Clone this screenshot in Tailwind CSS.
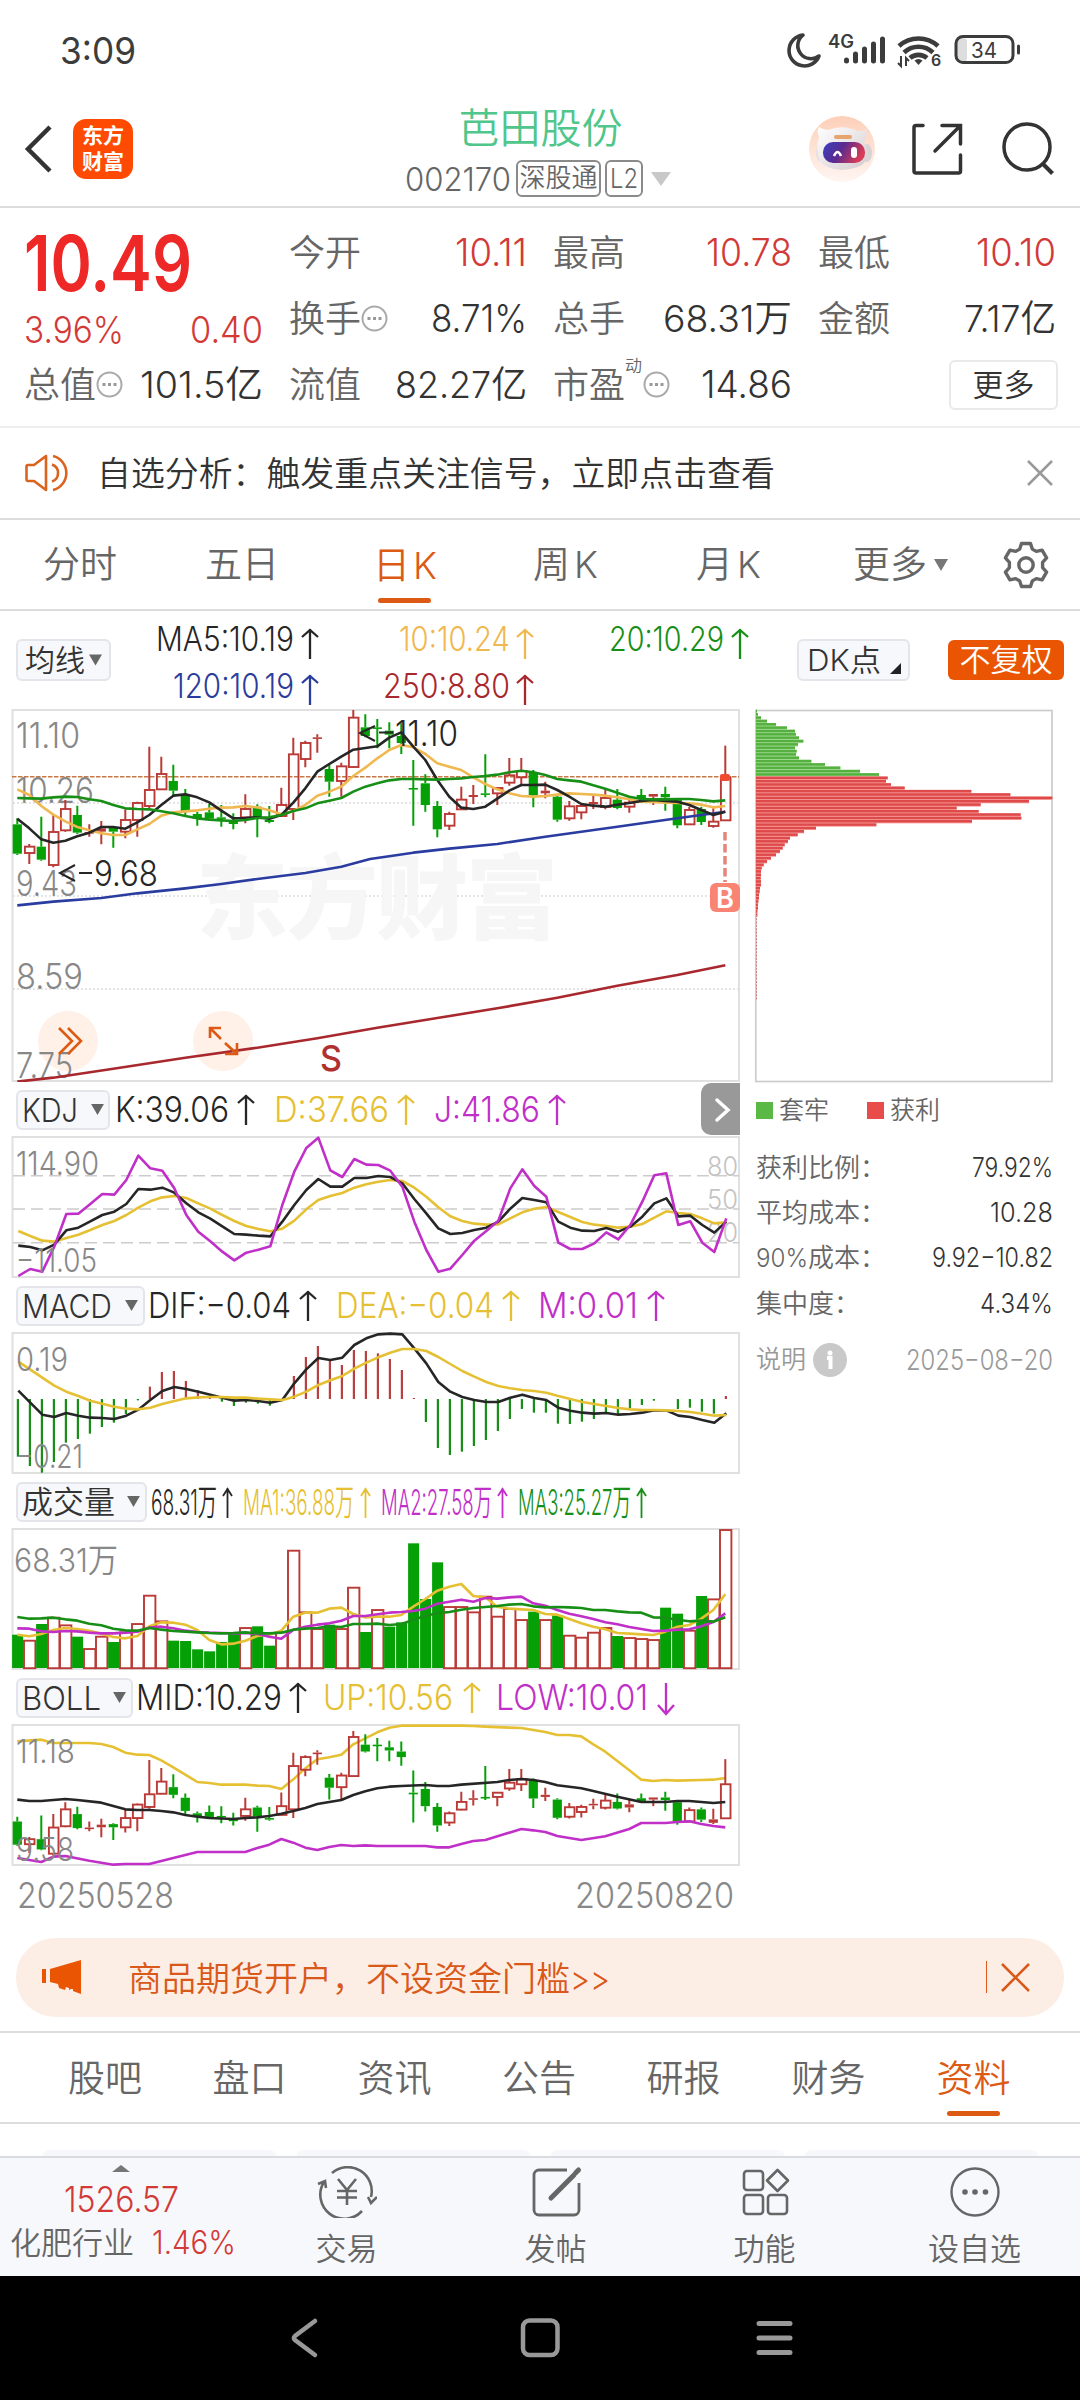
<!DOCTYPE html>
<html lang="zh-CN">
<head>
<meta charset="utf-8">
<title>芭田股份 002170</title>
<script src="https://cdn.jsdelivr.net/npm/@tailwindcss/browser@4"></script>
</head>
<body class="w-[1080px] h-[2400px] overflow-hidden bg-white font-['Inter','Noto_Sans_CJK_SC',sans-serif] font-[350] text-[#333] whitespace-nowrap">
<div class="flex flex-col w-[1080px] h-[2400px]">

<!-- status bar -->
<div class="h-[100px] flex items-center justify-between pl-[60px] pr-[58px]">
  <span data-w="76" class="inline-block text-[37px] font-normal text-[#3c3c3c]">3:09</span>
  <svg class="w-[236px] h-[40px] text-[#3c3c3c]" viewBox="786 30 236 40" fill="none" stroke="currentColor">
    <path d="M803 35a15.5 15.5 0 1 0 16 21a13 13 0 0 1-16-21z" stroke-width="3.6" stroke-linejoin="round"/>
    <text x="828" y="48" font-size="18" font-weight="600" fill="currentColor" stroke="none" textLength="26" lengthAdjust="spacingAndGlyphs">4G</text>
    <g stroke-width="5" stroke-linecap="round"><path d="M846.500 60v1M855.500 54v7M864.500 49v12M873.500 44v17M882.500 39v22"/></g>
    <path d="M899 46a29 29 0 0 1 39 0M904 52.500a21 21 0 0 1 29 0M910 58a13 13 0 0 1 17 0" stroke-width="4.600"/>
    <path d="M918.500 65l-4-4.500a6 6 0 0 1 8 0z" fill="currentColor" stroke="none"/>
    <path d="M901 56v10l-3-3M906 66v-8l3 3" stroke-width="2"/>
    <text x="931" y="66" font-size="16" font-weight="600" fill="currentColor" stroke="none">6</text>
    <rect x="957" y="38" width="10" height="24" rx="4" fill="#ddd" stroke="none"/>
    <rect x="956" y="36.500" width="57" height="26" rx="7" stroke-width="3"/>
    <path d="M1018.500 46v7" stroke-width="3" stroke-linecap="round"/>
    <text x="971" y="58" font-size="22" font-weight="400" fill="currentColor" stroke="none" textLength="26" lengthAdjust="spacingAndGlyphs">34</text>
  </svg>
</div>

<!-- header -->
<div class="h-[108px] border-b-2 border-[#dcdcdf] flex items-start">
  <svg class="w-[73px] h-[106px] shrink-0" viewBox="0 100 73 106" fill="none"><path d="M50 127L28 149L50 171" stroke="#333" stroke-width="4.500" /></svg>
  <div class="w-[60px] h-[60px] mt-[19px] shrink-0 rounded-[13px] bg-[#fe4a03] text-white text-[21px] leading-[26px] font-bold flex flex-col items-center justify-center"><span>东方</span><span>财富</span></div>
  <div class="w-[405px] ml-[205px] flex flex-col items-center">
    <div class="h-[56px] leading-[56px] text-[41px] text-[#50c68c]">芭田股份</div>
    <div class="h-[46px] flex items-center self-start ml-[67px] text-[#666]">
      <span data-w="106" class="inline-block text-[33px]">002170</span>
      <span class="ml-[5px] w-[85px] h-[37px] border-2 border-[#8a8a8a] rounded-md text-[26px] leading-[32px] text-center">深股通</span>
      <span class="ml-[4px] w-[38px] h-[37px] border-2 border-[#8a8a8a] rounded-md text-[27px] leading-[33px] text-center"><span data-w="28" class="inline-block">L2</span></span>
      <svg class="ml-[8px] w-5 h-[14px]" viewBox="0 0 20 14"><path d="M0 0h20L10 14z" fill="#c8c8c8"/></svg>
    </div>
  </div>
  <svg class="w-[270px] h-[106px] ml-auto shrink-0" viewBox="810 100 270 106" fill="none" stroke="#333" stroke-width="3.500" overflow="visible">
    <defs>
      <linearGradient id="halo" x1="0" y1="0" x2="0" y2="1"><stop offset="0" stop-color="#fdcfb8"/><stop offset="1" stop-color="#fff6f2"/></linearGradient>
      <linearGradient id="visor" x1="0" y1="0" x2="1" y2="0.300"><stop offset="0" stop-color="#3a3fc0"/><stop offset="0.500" stop-color="#5a2a90"/><stop offset="1" stop-color="#d83b55"/></linearGradient>
      <linearGradient id="shell" x1="0" y1="0" x2="1" y2="1"><stop offset="0" stop-color="#fff"/><stop offset="1" stop-color="#d4ccd0"/></linearGradient>
    </defs>
    <g stroke="none">
      <circle cx="842" cy="149" r="33" fill="url(#halo)"/>
      <ellipse cx="821" cy="153" rx="5" ry="9" fill="#e6e0e3"/><ellipse cx="867" cy="153" rx="5" ry="9" fill="#d9d2d6"/>
      <path d="M819 137q-3-6 0-10q4 3 9 3q15-6 30 1q5 0 8-2q2 7-2 12q6 12 2 20q-6 8-24 9q-17-1-22-9q-5-12-1-24z" fill="url(#shell)"/>
      <rect x="834" y="135" width="18" height="4" rx="2" fill="#e7a46c"/>
      <rect x="823" y="142" width="42" height="21" rx="10" fill="url(#visor)"/>
      <rect x="851" y="147" width="6" height="11" rx="3" fill="#fff"/>
    </g>
    <path d="M834 156q3.500-8 7 0" stroke="#fff" stroke-width="2.600"/>
    <path d="M923 125.500H916a2 2 0 0 0-2 2V171a2 2 0 0 0 2 2H958.500a2 2 0 0 0 2-2V155M942 125.500H960.500V144M960 126L935 151" stroke-linecap="round"/>
    <circle cx="1027" cy="147" r="23"/><path d="M1043 164L1052.500 173.500" stroke-width="4"/>
  </svg>
</div>

<!-- quote -->
<div class="h-[221px] border-b-2 border-[#eee] pt-[12px] px-6 grid grid-cols-[239px_238px_239px_238px] grid-rows-[66px_66px_66px] gap-x-[26px] text-[36px] leading-[66px]">
  <div class="row-span-2 text-[#d23a38]">
    <div class="h-[86px] leading-[86px] text-[77px] font-semibold text-[#ee2826]"><span data-w="168" class="inline-block">10.49</span></div>
    <div class="h-[46px] leading-[48px] text-[37px] flex justify-between"><span data-w="100" class="inline-block">3.96%</span><span data-w="73" class="inline-block">0.40</span></div>
  </div>
  <div class="flex justify-between"><span class="text-[#666]">今开</span><span data-w="72" class="inline-block text-[38px] text-[#d23a38]">10.11</span></div>
  <div class="flex justify-between"><span class="text-[#666]">最高</span><span data-w="86" class="inline-block text-[38px] text-[#d23a38]">10.78</span></div>
  <div class="flex justify-between"><span class="text-[#666]">最低</span><span data-w="80" class="inline-block text-[38px] text-[#d23a38]">10.10</span></div>
  <div class="flex justify-between"><span class="text-[#666] flex items-center">换手<svg class="w-[27px] h-[27px]" viewBox="0 0 27 27"><circle cx="13.500" cy="13.500" r="12" fill="none" stroke="#aaa" stroke-width="2"/><path d="M6.500 13.500h3M12 13.500h3M17.500 13.500h3" stroke="#999" stroke-width="3"/></svg></span><span data-w="96" class="inline-block text-[38px]">8.71%</span></div>
  <div class="flex justify-between"><span class="text-[#666]">总手</span><span data-w="129" class="inline-block text-[37px]">68.31万</span></div>
  <div class="flex justify-between"><span class="text-[#666]">金额</span><span data-w="92" class="inline-block text-[37px]">7.17亿</span></div>
  <div class="flex justify-between"><span class="text-[#666] flex items-center">总值<svg class="w-[27px] h-[27px]" viewBox="0 0 27 27"><circle cx="13.500" cy="13.500" r="12" fill="none" stroke="#aaa" stroke-width="2"/><path d="M6.500 13.500h3M12 13.500h3M17.500 13.500h3" stroke="#999" stroke-width="3"/></svg></span><span data-w="123" class="inline-block text-[37px]">101.5亿</span></div>
  <div class="flex justify-between"><span class="text-[#666]">流值</span><span data-w="132" class="inline-block text-[37px]">82.27亿</span></div>
  <div class="flex justify-between"><span class="text-[#666] flex items-center">市盈<span class="text-[17px] leading-none self-start mt-[6px] w-[18px]">动</span><svg class="w-[27px] h-[27px]" viewBox="0 0 27 27"><circle cx="13.500" cy="13.500" r="12" fill="none" stroke="#aaa" stroke-width="2"/><path d="M6.500 13.500h3M12 13.500h3M17.500 13.500h3" stroke="#999" stroke-width="3"/></svg></span><span data-w="91" class="inline-block text-[38px]">14.86</span></div>
  <div class="flex justify-end items-center"><span class="w-[109px] h-[50px] -mr-[2px] border-2 border-[#e9e9ec] rounded-md text-[31px] leading-[45px] text-center">更多</span></div>
</div>

<!-- notice -->
<div class="h-[92px] border-b-2 border-[#dcdcdf] flex items-center pl-6 pr-[27px]">
  <svg class="w-[48px] h-[40px]" viewBox="0 0 48 40" fill="none" stroke="#d9631f" stroke-width="2.600"><path d="M22 3L10 12H4a1.500 1.500 0 0 0-1.500 1.500V26.500A1.500 1.500 0 0 0 4 28H10L22 37zM28 11.500a9 9 0 0 1 0 17M29 3a17.500 17.500 0 0 1 0 34" stroke-linejoin="round"/></svg>
  <span class="ml-[25px] pt-[2px] text-[33.900px]">自选分析：触发重点关注信号，立即点击查看</span>
  <svg class="ml-auto w-[26px] h-[26px]" viewBox="0 0 26 26" stroke="#999" stroke-width="2.500"><path d="M1 1L25 25M25 1L1 25"/></svg>
</div>

<!-- period tabs -->
<div class="h-[91px] border-b-2 border-[#dcdcdf] flex items-center text-[37px] leading-[92px] text-[#666] pl-[43px] pr-[30px]">
  <span class="w-[162px]">分时</span>
  <span class="w-[168px]">五日</span>
  <span class="w-[160px] h-full flex flex-col items-start text-[#dc5a14]"><span class="leading-[92px] h-[78px]">日<span class="ml-[3px]">K</span></span><span class="ml-[5px] w-[53px] h-[5px] rounded-full bg-[#dc5a14]"></span></span>
  <span class="w-[163px]">周<span class="ml-[4px]">K</span></span>
  <span class="w-[157px]">月<span class="ml-[4px]">K</span></span>
  <span class="flex items-center">更多<svg class="ml-[7px] w-[14px] h-[12px]" viewBox="0 0 14 12"><path d="M0 0h14L7 12z" fill="#777"/></svg></span>
  <svg class="ml-auto w-[48px] h-[48px]" viewBox="0 0 48 48" fill="none" stroke="#666" stroke-width="3.400" stroke-linejoin="round"><path d="M19.500 2.500h9l1.800 5.600 4 2.300 5.800-1.300 4.500 7.800-4 4.400v5.400l4 4.400-4.500 7.800-5.800-1.300-4 2.300-1.800 5.600h-9l-1.800-5.600-4-2.300-5.800 1.300-4.500-7.800 4-4.400v-5.400l-4-4.400 4.500-7.800 5.800 1.300 4-2.300z"/><circle cx="24" cy="24" r="7.200"/></svg>
</div>

<!-- moving average row -->
<div class="h-[97px] flex items-center pl-4 pr-4">
  <span class="w-[95px] h-[42px] border-2 border-[#e3e5ea] bg-[#f7f8fb] rounded-md flex items-center justify-center text-[30px]"><span class="pt-[2px]">均线</span><svg class="ml-1 w-[13px] h-[12px]" viewBox="0 0 14 12"><path d="M0 0h14L7 12z" fill="#666"/></svg></span>
  <svg id="ma" class="w-[686px] h-[93px]" viewBox="111 612 686 93"></svg>
  <span class="w-[113px] h-[42px] border-2 border-[#e3e5ea] bg-[#f7f8fb] rounded-md flex items-center justify-center text-[30px]"><span data-w="74" class="inline-block pt-[2px]">DK点</span><svg class="ml-[9px] mt-[18px] w-[11px] h-[11px]" viewBox="0 0 11 11"><path d="M11 0V11H0z" fill="#222"/></svg></span>
  <span class="ml-auto w-[116px] h-[40px] bg-[#ea5504] rounded-md text-center text-white text-[31px] leading-[40px]">不复权</span>
</div>

<!-- charts -->
<div class="h-[1213px] flex">
  <div class="w-[752px] flex flex-col">
    <svg id="main" class="w-[752px] h-[374px]" viewBox="0 708 752 374"></svg>
    <div class="h-[54px] flex pl-4">
      <span class="mt-2 w-[94px] h-[40px] border-2 border-[#e3e5ea] bg-[#f7f8fb] rounded-md flex items-center pl-1 text-[33px]"><span data-w="56" class="inline-block">KDJ</span><svg class="ml-[13px] w-[13px] h-[11px]" viewBox="0 0 14 12"><path d="M0 0h14L7 12z" fill="#666"/></svg></span>
      <svg id="kdjL" class="w-[642px] h-[54px]" viewBox="110 1082 642 54"></svg>
    </div>
    <svg id="kdj" class="w-[752px] h-[142px]" viewBox="0 1136 752 142"></svg>
    <div class="h-[54px] flex pl-4">
      <span class="mt-2 w-[129px] h-[40px] border-2 border-[#e3e5ea] bg-[#f7f8fb] rounded-md flex items-center pl-1 text-[33px]"><span data-w="90" class="inline-block">MACD</span><svg class="ml-[13px] w-[13px] h-[11px]" viewBox="0 0 14 12"><path d="M0 0h14L7 12z" fill="#666"/></svg></span>
      <svg id="macdL" class="w-[607px] h-[54px]" viewBox="145 1278 607 54"></svg>
    </div>
    <svg id="macd" class="w-[752px] h-[142px]" viewBox="0 1332 752 142"></svg>
    <div class="h-[54px] flex pl-4">
      <span class="mt-2 w-[131px] h-[40px] border-2 border-[#e3e5ea] bg-[#f7f8fb] rounded-md flex items-center pl-1 text-[31px]">成交量<svg class="ml-[12px] w-[13px] h-[11px]" viewBox="0 0 14 12"><path d="M0 0h14L7 12z" fill="#666"/></svg></span>
      <svg id="volL" class="w-[605px] h-[54px]" viewBox="147 1474 605 54"></svg>
    </div>
    <svg id="vol" class="w-[752px] h-[142px]" viewBox="0 1528 752 142"></svg>
    <div class="h-[54px] flex pl-4">
      <span class="mt-2 w-[117px] h-[40px] border-2 border-[#e3e5ea] bg-[#f7f8fb] rounded-md flex items-center pl-1 text-[33px]"><span data-w="79" class="inline-block">BOLL</span><svg class="ml-[12px] w-[13px] h-[11px]" viewBox="0 0 14 12"><path d="M0 0h14L7 12z" fill="#666"/></svg></span>
      <svg id="bollL" class="w-[619px] h-[54px]" viewBox="133 1670 619 54"></svg>
    </div>
    <svg id="boll" class="w-[752px] h-[142px]" viewBox="0 1724 752 142"></svg>
    <div class="h-[55px] pt-1 flex items-center justify-between pl-[17px] pr-[18px] text-[35px] text-[#888]"><span data-w="157" class="inline-block">20250528</span><span data-w="159" class="inline-block">20250820</span></div>
  </div>
  <div class="w-[328px] flex flex-col">
    <svg id="chips" class="w-[328px] h-[375px]" viewBox="752 708 328 375"></svg>
    <div class="mt-[8px] ml-1 h-10 flex items-center text-[25px] text-[#666]"><span class="w-[17px] h-[17px] bg-[#5ab845]"></span><span class="ml-[6px] w-[88px]">套牢</span><span class="w-[17px] h-[17px] bg-[#e84c4b]"></span><span class="ml-[6px]">获利</span></div>
    <div class="mt-[14px] ml-1 w-[297px] grid grid-rows-[45px_45px_46px_46px] leading-[46px] text-[26px] text-[#666]">
      <div class="flex justify-between"><span>获利比例：</span><span data-w="81" class="inline-block text-[27px] text-[#333]">79.92%</span></div>
      <div class="flex justify-between"><span>平均成本：</span><span data-w="63" class="inline-block text-[27px] text-[#333]">10.28</span></div>
      <div class="flex justify-between"><span class="flex"><span data-w="52" class="inline-block">90%</span>成本：</span><span data-w="121" class="inline-block text-[27px] text-[#333]">9.92−10.82</span></div>
      <div class="flex justify-between"><span>集中度：</span><span data-w="73" class="inline-block text-[27px] text-[#333]">4.34%</span></div>
    </div>
    <div class="mt-[10px] ml-1 w-[297px] h-[46px] flex items-center text-[25px] text-[#999]"><span>说明</span><svg class="ml-[7px] w-[34px] h-[34px]" viewBox="0 0 34 34"><circle cx="17" cy="17" r="17" fill="#c9c9c9"/><circle cx="17" cy="10" r="2.500" fill="#fff"/><path d="M14 15h3.500v11" stroke="#fff" stroke-width="4" fill="none"/></svg><span data-w="147" class="inline-block ml-auto text-[28px]">2025−08−20</span></div>
  </div>
</div>

<!-- banner -->
<div class="mx-4 mt-[17px] h-[79px] shrink-0 rounded-[39px] bg-[#fdeee5] text-[#d9591a] flex items-center pl-[25px] pr-[34px]">
  <svg class="w-[42px] h-[36px]" viewBox="0 0 42 36" fill="#ea5504"><path d="M1 10h4v14H1zM9 10L40 1V35l-8-3v-2h-2l-2 1v-2l-3-1-1 3-6-2-1-4-8-2z"/></svg>
  <span class="ml-[45px] pt-[2px] text-[34px] flex">商品期货开户，不设资金门槛<span data-w="40" class="inline-block">&gt;&gt;</span></span>
  <span class="ml-auto w-[1px] h-[32px] bg-[#d9591a]"></span>
  <svg class="ml-[14px] w-[29px] h-[29px]" viewBox="0 0 29 29" stroke="#d9591a" stroke-width="2.600"><path d="M1 1L28 28M28 1L1 28"/></svg>
</div>

<!-- content tabs -->
<div class="mt-[14px] h-[93px] shrink-0 border-y-2 border-[#dcdcdf] grid grid-cols-[144px_145px_145px_144px_145px_145px_145px] pl-[33px] text-[37px] leading-[91px] text-center text-[#666]">
  <span>股吧</span><span>盘口</span><span>资讯</span><span>公告</span><span>研报</span><span>财务</span>
  <span class="text-[#dc5a14] flex flex-col items-center"><span class="h-[78px]">资料</span><span class="w-[53px] h-[5px] rounded-full bg-[#dc5a14]"></span></span>
</div>
<div class="h-[32px] shrink-0 overflow-hidden pt-[26px] pl-[42px] flex gap-[19px]">
  <span class="w-[235px] h-8 rounded-lg bg-[#f7f8fb]"></span><span class="w-[235px] h-8 rounded-lg bg-[#f7f8fb]"></span><span class="w-[235px] h-8 rounded-lg bg-[#f7f8fb]"></span><span class="w-[235px] h-8 rounded-lg bg-[#f7f8fb]"></span>
</div>

<!-- bottom bar -->
<div class="h-[120px] shrink-0 bg-[#f7f8fb] border-t-2 border-[#d9dbe0] grid grid-cols-[242px_209px_209px_209px_211px] text-[31px] text-[#666]">
  <div class="flex flex-col items-center">
    <svg class="mt-[7px] w-[18px] h-[7px]" viewBox="0 0 18 7"><path d="M0 7h18L9 0z" fill="#777"/></svg>
    <div class="h-[54px] leading-[54px] text-[35px] text-[#d23a38]"><span data-w="115" class="inline-block">1526.57</span></div>
    <div class="h-[34px] leading-[34px] self-start ml-[10px] flex"><span class="w-[142px]">化肥行业</span><span data-w="84" class="inline-block text-[32px] text-[#d23a38]">1.46%</span></div>
  </div>
  <div class="flex flex-col items-center"><svg class="mt-[8px] w-[60px] h-[52px]" viewBox="316 2166 60 52" fill="none" stroke="#666" stroke-width="2.600"><path d="M331 2173A24 24 0 0 1 370 2197M361 2211A24 24 0 0 1 323 2182M317 2184L324 2181L325 2188M376 2197L370 2203L367 2197M337 2179L346 2190L355 2179M346 2190V2205M336 2191H356M336 2197.500H356"/></svg><span class="leading-[46px] mt-[8px]">交易</span></div>
  <div class="flex flex-col items-center"><svg class="mt-[8px] w-[60px] h-[52px]" viewBox="525 2166 60 52" fill="none" stroke="#666" stroke-width="2.800"><path d="M566 2170H538A5 5 0 0 0 533 2175V2210A5 5 0 0 0 538 2215H573A5 5 0 0 0 578 2210V2183"/><path d="M550 2198L573 2175M574.500 2173L577.500 2170" stroke-width="5" stroke-linecap="round"/></svg><span class="leading-[46px] mt-[8px]">发帖</span></div>
  <div class="flex flex-col items-center"><svg class="mt-[8px] w-[60px] h-[52px]" viewBox="734 2166 60 52" fill="none" stroke="#666" stroke-width="2.600"><rect x="743" y="2171" width="19" height="19" rx="3"/><rect x="743" y="2195" width="19" height="19" rx="3"/><rect x="767" y="2195" width="19" height="19" rx="3"/><path d="M776.500 2170L787 2180.500L776.500 2191L766 2180.500z" stroke-linejoin="round"/></svg><span class="leading-[46px] mt-[8px]">功能</span></div>
  <div class="flex flex-col items-center"><svg class="mt-[8px] w-[60px] h-[52px]" viewBox="944 2166 60 52"><circle cx="974" cy="2192" r="23.500" fill="none" stroke="#666" stroke-width="2.400"/><g fill="#666"><circle cx="964" cy="2192" r="2.800"/><circle cx="974" cy="2192" r="2.800"/><circle cx="984.500" cy="2192" r="2.800"/></g></svg><span class="leading-[46px] mt-[8px]">设自选</span></div>
</div>

<!-- system navigation -->
<div class="h-[124px] shrink-0 bg-black">
  <svg class="w-[1080px] h-[124px]" viewBox="0 2276 1080 124" fill="none" stroke="#999" stroke-width="4.500" stroke-linecap="round"><path d="M315 2321L295 2336Q293 2338 295 2340L315 2355"/><rect x="523" y="2320.500" width="34.500" height="34.500" rx="6.500"/><path d="M759 2323.500H790M759 2338H790M759 2352.500H790" stroke-width="5"/></svg>
</div>
</div>

<script>
const RED='#b93a36', GREEN='#05a005', BLK='#262626', YEL='#e6c033', PUR='#c030c8', OR='#f0b850', DG='#178f17';
const $=id=>document.getElementById(id);
const X=(i,o=17.3)=>o+12*i;
const text=(x0,x1,y,s,c,size=35,w=350)=>`<text x="${x0}" y="${y}" fill="${c}" font-size="${size}" font-weight="${w}" textLength="${x1-x0}" lengthAdjust="spacingAndGlyphs">${s}</text>`;
const arrow=(x,cy,c,w=16,down=false)=>{const h=w/2,t=cy-15,b=cy+15,e=down?b:t,k=down?-8:8;return `<path d="M${x+h} ${t}V${b}M${x} ${e+k}L${x+h} ${e+1}L${x+w} ${e+k}" fill="none" stroke="${c}" stroke-width="${w<12?1.8:2.3}"/>`};
// ys: one value per session, or [index, value] pairs; values are thirds of a pixel below base
const line=(ys,base,c,o=17.3,w=2.6)=>`<polyline fill="none" stroke="${c}" stroke-width="${w}" stroke-linejoin="round" points="${ys.map((v,i)=>Array.isArray(v)?X(v[0],o)+','+(base+v[1]/3):X(i,o)+','+(base+v/3)).join(' ')}"/>`;
const frame=(y,h)=>`<rect x="12.500" y="${y}" width="726.500" height="${h}" fill="none" stroke="#e0e0e0" stroke-width="2"/>`;

const C=`g355,373,461,465 r432,440,459,492 g350,440,479,482 r345,396,495,502 r300,327,391,395 g317,345,398,402 r373,396,401,410 r363,385,395,433 g380,383,395,443 r328,360,395,415 r305,309,360,410 r140,270,318,325 r170,222,268,270 g194,243,272,285 g267,283,333,350 g335,342,356,377 g312,337,356,358 g315,352,356,380 g340,365,372,388 r283,327,352,370 g313,320,353,412 g318,360,366,370 r263,315,348,350 r113,163,327,360 r122,129,177,202 r103,112,116,158 g193,207,245,290 r188,199,243,290 r30,53,201,203 g43,82,108,112 g57,82,86,145 g67,92,104,145 g70,108,129,162 g180,264,268,377 g223,250,315,335 g303,318,388,412 r335,342,377,390 r260,299,328,330 r255,285,291,312 g163,280,284,292 r262,264,280,315 r174,226,248,257 r174,213,232,258 g210,217,286,322 r245,272,280,295 g285,290,359,365 r303,319,355,362 r310,318,337,358 r287,306,312,327 r265,294,321,328 g267,299,324,328 r290,308,320,338 g267,285,297,300 r282,282,290,315 g260,282,292,332 g295,300,376,385 r320,330,373,375 g320,327,366,375 r325,365,378,383 r137,232,361,361`.split(' ').map(s=>[s[0],...s.slice(1).split(',').map(Number)]);
const candles=f=>C.map(([k,h,t,b,l],i)=>{const x=X(i),c=k=='g'?GREEN:RED;h=f(h);t=f(t);b=f(b);l=f(l);const bh=Math.max(b-t,1.6);
  let s=`<path d="M${x} ${h}V${t}M${x} ${b}V${l}" stroke="${c}" stroke-width="2"/>`;
  s+=(k=='g'||bh<4)?`<rect x="${x-4.6}" y="${t}" width="9.200" height="${bh}" fill="${c}"/>`:`<rect x="${x-4.4}" y="${t}" width="9.600" height="${bh}" fill="none" stroke="${c}" stroke-width="1.900"/>`;return s}).join('');

$('ma').innerHTML=text(156,294,650,'MA5:10.19',BLK,34)+arrow(302,643,BLK)+text(399,510,650,'10:10.24',OR,34)+arrow(517,643,OR)+text(609,724,650,'20:10.29',DG,34)+arrow(732,643,DG)+text(173,294,697,'120:10.19','#2a3c9c',34)+arrow(302,689,'#2a3c9c')+text(383,510,697,'250:8.80','#a8282e',34)+arrow(517,689,'#a8282e');

$('main').innerHTML=frame(710,371)+
 [803,896,989].map(y=>`<path d="M13 ${y}H739" stroke="#ddd" stroke-width="1.500" stroke-dasharray="2 2"/>`).join('')+
 `<text x="196" y="932" font-size="92" font-weight="900" fill="#f6f6f6" textLength="362">东方财富</text>`+
 `<circle cx="68" cy="1041" r="30" fill="#fff0e8"/><circle cx="223" cy="1041" r="30" fill="#fff0e8"/>`+
 `<path d="M12 776.700H739" stroke="#c87846" stroke-width="1.500" stroke-dasharray="4.500 1.500"/>`+
 text(16,80,748,'11.10','#888')+text(16,94,803,'10.26','#888')+text(16,77,896,'9.43','#888')+text(16,83,989,'8.59','#888')+text(16,73,1078,'7.75','#888')+
 candles(y=>700+y/3)+
 line([[0,616],[3,605],[7,594],[10,580],[14,565],[17,552],[20,537],[24,519],[27,500],[29.4,477],[33,458],[36,446],[40,432],[44,410],[50,380],[55,355],[59,335]],700,'#2a3ca0')+
 line([[0,1145],[3,1133],[8,1106],[14,1073],[20,1043],[25,1015],[30,983],[35,954],[40,925],[45,893],[50,857],[55,825],[59,796]],700,'#a8282e')+
 line([268,285,318,344,364,381,391,400,405,405,388,372,347,337,334,331,326,323,322,318,322,331,343,333,315,287,275,260,228,203,175,150,135,142,162,190,200,210,232,252,268,280,288,290,288,284,280,282,284,287,292,298,305,306,308,309,310,314,322,318],700,OR)+
 line([356,385,418,428,422,409,398,381,381,386,367,345,315,287,283,292,307,332,355,354,352,356,345,308,265,215,192,170,149,144,139,113,97,140,180,240,290,323,327,320,296,272,255,255,254,270,290,312,317,320,314,309,303,300,303,305,315,330,345,335],700,BLK)+
 line([294,295,296,292,290,291,298,303,315,325,327,328,334,340,348,355,359,361,363,360,354,352,345,333,325,310,302,294,275,260,250,241,237,237,238,239,237,235,231,228,224,217,212,217,225,237,241,245,256,266,278,290,297,298,298,297,297,300,304,301],700,DG)+
 `<g fill="none" stroke="${BLK}" stroke-width="2"><path d="M75 865L60 873L75 881M79 873H92M375 726L360 733L375 741M379 732.500H393"/></g>`+
 text(94,158,886,'9.68',BLK)+text(395,458,746,'11.10',BLK)+
 `<g fill="none" stroke="#dc5a14" stroke-width="2.600"><path d="M59 1028L72 1041L59 1054M68 1028L81 1041L68 1054M221 1039L210 1028M210 1038V1028H221M225 1043L237 1054M237 1043V1054H225"/></g>`+
 text(320,342,1071,'S','#b03030',36,500)+
 `<rect x="720" y="774" width="10" height="7" rx="2" fill="#f04a30"/><path d="M725 832V882" stroke="#e58478" stroke-width="3.500" stroke-dasharray="8.500 3.500"/><rect x="710" y="883" width="30" height="29" rx="6" fill="#f98474"/>`+text(716,734,908,'B','#fff',28,600);

const head=(id,cy,items)=>{$(id).innerHTML=items.map(([a,b,s,c,ax,aw=16,d])=>text(a,b,cy+12.5,s,c,35)+arrow(ax,cy+1,c,aw,d)).join('')};
head('kdjL',1109,[[115,229,'K:39.06',BLK,238],[274,389,'D:37.66',YEL,398],[434,540,'J:41.86',PUR,549]]);
$('kdjL').innerHTML+='<path d="M740 1083H711a10 10 0 0 0-10 10v32a10 10 0 0 0 10 10H740z" fill="#999"/><path d="M717 1100L728 1110L717 1120" fill="none" stroke="#fff" stroke-width="3.500" stroke-linecap="round"/>';
head('macdL',1305,[[148,291,'DIF:−0.04',BLK,300],[336,494,'DEA:−0.04',YEL,503],[538,638,'M:0.01',PUR,648]]);
head('volL',1502,[[151,217,'68.31万',BLK,223,9],[243,354,'MA1:36.88万',YEL,361,9],[381,492,'MA2:27.58万',PUR,498,9],[518,631,'MA3:25.27万',DG,637,9]]);
head('bollL',1697,[[136,282,'MID:10.29',BLK,290],[323,453,'UP:10.56',YEL,464],[496,648,'LOW:10.01',PUR,658,16,true]]);

$('kdj').innerHTML=frame(1137,140)+
 [1175.7,1209,1242.7].map(y=>`<path d="M13 ${y}H739" stroke="#ccc" stroke-width="1.500" stroke-dasharray="12 6"/>`).join('')+
 text(707,738,1176,'80','#c4c4c4',27)+text(707,738,1209,'50','#c4c4c4',27)+text(707,738,1242,'20','#c4c4c4',27)+
 line([453,468,482,485,474,464,450,435,423,405,383,364,352,348,354,370,386,405,423,438,447,454,446,422,388,360,348,339,323,313,305,300,303,323,350,382,409,423,431,434,433,415,397,386,381,396,411,426,434,438,443,440,432,413,394,399,402,415,430,427],1080,YEL,18.3)+
 line([497,501,511,494,451,443,424,405,395,372,327,329,323,338,370,397,416,439,462,464,467,469,425,375,330,297,320,320,294,294,288,291,310,357,400,445,462,459,450,443,425,386,354,360,367,425,443,452,453,444,455,440,410,370,355,409,407,435,458,425],1080,BLK,18.3)+
 line([588,567,575,500,402,401,372,342,344,300,227,265,272,325,405,455,484,515,541,518,509,499,375,275,204,173,271,291,237,254,255,272,320,425,510,575,566,525,482,453,422,325,268,318,350,488,507,507,490,457,478,435,365,286,280,435,424,488,516,415],1080,PUR,18.3)+
 text(16,99,1175,'114.90','#888',33)+text(16,97,1272,'−11.05','#888',33);

$('macd').innerHTML=frame(1333,140)+
 [1130,1158,1178,1146,1088,1077,1061,1041,1028,1002,961,920,876,873,903,931,948,965,978,968,971,977,957,888,831,798,840,855,810,813,820,837,870,954,1026,1104,1125,1115,1098,1080,1053,1017,987,998,998,1031,1032,1025,1017,1000,1002,985,975,962,957,987,983,995,1001,948].map((v,i)=>`<path d="M${X(i,17.9)} 1399V${1080+v/3}" stroke="${v>957?'#178f17':'#b84040'}" stroke-width="2.200"/>`).join('')+
 line([932,968,1004,1011,999,1007,1013,1014,1017,1007,989,960,933,921,927,935,944,953,962,960,963,968,960,910,868,834,840,833,795,775,763,761,763,805,850,906,935,951,960,966,966,953,944,954,960,983,992,998,1001,999,1004,1002,998,991,991,1007,1011,1020,1028,1000],1080,BLK,18.3)+
 line([845,869,893,917,935,948,962,971,980,986,988,983,972,963,955,952,951,951,953,953,956,958,960,950,935,915,901,888,866,848,832,818,807,807,813,831,852,873,890,906,918,925,930,933,938,948,957,966,972,978,984,988,990,990,991,993,996,1001,1007,1005],1080,YEL,18.3)+
 text(16,68,1371,'0.19','#888',33)+text(16,83,1468,'−0.21','#888',33);

$('vol').innerHTML=frame(1529,140)+
 'g464 r480 g432 r411 r434 g470 r505 r468 g486 r455 r430 r345 r422 g482 g483 g508 g514 g486 g460 r442 g439 g497 r455 r210 r395 r445 g434 r445 r321 g456 r388 g440 g427 g190 g357 g247 r379 r379 r395 r348 r408 r385 r418 g395 r418 g406 r465 r471 r456 r442 g468 r472 r475 r478 g383 g401 r450 g348 r356 r148'.split(' ').map((s,i)=>{const x=X(i),t=1480+s.slice(1)/3;return s[0]=='g'?`<rect x="${x-5.2}" y="${t}" width="11" height="${1668-t}" fill="${GREEN}"/>`:`<rect x="${x-5.3}" y="${t+.7}" width="11.400" height="${1667.5-t}" fill="#fff" stroke="${RED}" stroke-width="1.900"/>`}).join('')+
 line([464,469,462,450,444,447,452,461,471,475,468,439,427,428,434,450,480,493,491,482,468,464,452,410,398,398,386,383,402,412,410,410,405,380,357,332,320,312,348,352,380,386,388,390,402,404,417,430,440,448,459,461,463,465,455,440,435,416,390,343],1480,YEL)+
 line([445,446,454,456,453,454,458,460,460,458,455,443,440,445,452,456,458,459,460,459,462,470,476,450,440,434,430,422,408,408,403,398,396,393,386,371,365,359,365,354,356,352,350,370,377,390,401,409,417,427,433,441,447,453,452,449,448,439,426,400],1480,PUR)+
 line([411,416,415,413,418,422,431,436,446,451,452,444,449,453,455,457,459,460,459,457,460,460,458,449,446,444,439,441,432,432,431,435,432,420,407,400,396,389,384,381,378,374,372,379,382,381,382,384,390,390,394,397,398,412,413,419,424,422,425,412],1480,DG)+
 text(14,118,1572,'68.31万','#888',33);

$('boll').innerHTML=frame(1725,140)+
 line([[0,784],[2,779],[3,789],[6,789],[7,792],[8,801],[9,818],[10,824],[11,825],[12,841],[13,862],[14,884],[15,906],[16,909],[17,914],[19,914],[20,917],[21,918],[22,927],[23,898],[24,865],[25,838],[26,832],[27,824],[28,793],[29,775],[30,757],[31,743],[32,737],[37,737],[38,738],[39,740],[41,743],[42,744],[43,750],[44,756],[45,765],[46,765],[47,769],[48,793],[49,815],[50,843],[51,871],[52,899],[53,903],[54,900],[55,902],[57,900],[58,899],[59,894]],1480,YEL)+
 candles(y=>1480+(771+(y-53)*.792)/3)+
 line([[0,959],[1,963],[2,963],[4,957],[5,960],[7,968],[8,978],[9,988],[10,990],[11,990],[12,993],[13,997],[14,1005],[15,1010],[16,1014],[18,1017],[19,1014],[20,1012],[21,1008],[22,1001],[23,993],[24,984],[25,972],[27,960],[28,945],[29,934],[30,925],[31,920],[32,918],[34,915],[35,918],[36,918],[37,914],[40,906],[41,900],[42,897],[43,900],[44,906],[45,916],[47,925],[48,933],[50,950],[52,966],[54,966],[55,963],[56,963],[58,969],[59,966]],1480,BLK)+
 line([[0,1134],[2,1146],[3,1130],[4,1128],[6,1142],[8,1154],[9,1152],[11,1152],[15,1116],[19,1116],[20,1104],[21,1094],[22,1077],[23,1088],[24,1103],[25,1110],[26,1101],[27,1095],[28,1098],[29,1096],[30,1098],[34,1098],[35,1102],[36,1102],[37,1092],[38,1083],[39,1080],[42,1047],[43,1051],[44,1056],[45,1068],[47,1080],[49,1069],[51,1047],[52,1029],[54,1029],[55,1026],[56,1024],[57,1032],[58,1038],[59,1042]],1480,PUR)+
 text(16,75,1763,'11.18','#888',33)+text(16,74,1861,'9.58','#888',33);

const W=[51,54,63,81,108,141,165,168,177,190,174,165,170,168,177,214,255,301,360,417,443,438,453,494,694,811,937,867,722,650,716,842,844,696,409,228,192,173,150,144,134,128,120,108,93,81,71,65,63,63,62,63,63,60,59,57,57,55,54,54,52,52];
$('chips').innerHTML=`<rect x="755.800" y="710.500" width="296.200" height="371" fill="none" stroke="#ccc" stroke-width="1.700"/>`+
 W.map((w,n)=>{const y=690+(59+10.03*n)/3,g=n<20;return `<rect x="756" y="${y}" width="${(w-48)/3}" height="3.350" fill="${g?'#9fdc92':'#f79a98'}"/><rect x="756" y="${y}" width="${(w-48)/3}" height="2.500" fill="${g?'#56b040':'#de4a4a'}"/>`}).join('')+
 `<path d="M756.500 915V1000" stroke="#d08080" stroke-width="1" stroke-dasharray="2 1.300"/>`;

document.querySelectorAll('[data-w]').forEach(e=>{const w=e.dataset.w,s=e.innerHTML;
  e.innerHTML=`<svg class="inline-block align-middle overflow-visible h-[1em]" width="${w}"><text x="0" y="0.774em" fill="currentColor" textLength="${w}" lengthAdjust="spacingAndGlyphs">${s}</text></svg>`});
</script>
</body>
</html>
